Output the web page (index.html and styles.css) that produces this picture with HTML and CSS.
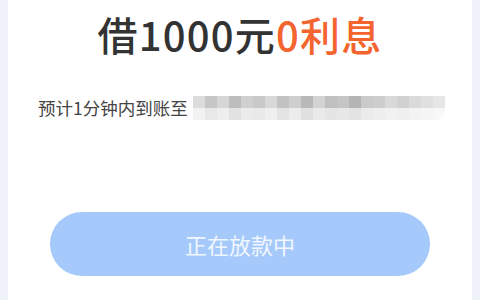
FILE: index.html
```html
<!DOCTYPE html>
<html lang="zh-CN">
<head>
  <meta charset="UTF-8">
  <meta name="viewport" content="width=device-width, initial-scale=1.0">
  <link rel="stylesheet" href="styles.css">
</head>
<body>

<div class="card">
  <h1 class="title">借1000元<span class="highlight">0利息</span></h1>

  <div class="arrive">
    <span class="arrive-text">预计1分钟内到账至</span>
    <!-- account number is masked -->
    <div class="mosaic">
      <i style="background:#dcdcdc"></i><i style="background:#c6c6c6"></i><i style="background:#d6d6d6"></i><i style="background:#bdbdbd"></i><i style="background:#d0d0d0"></i><i style="background:#c9c9c9"></i><i style="background:#d8d8d8"></i><i style="background:#c2c2c2"></i><i style="background:#cfcfcf"></i><i style="background:#b9b9b9"></i><i style="background:#d3d3d3"></i><i style="background:#c0c0c0"></i><i style="background:#c5c5c5"></i><i style="background:#b4b4b4"></i><i style="background:#cacaca"></i><i style="background:#cdcdcd"></i><i style="background:#d9d9d9"></i><i style="background:#d1d1d1"></i><i style="background:#dadada"></i><i style="background:#e0e0e0"></i><i style="background:#e6e6e6"></i>
      <i style="background:#f2f2f2"></i><i style="background:#e8e8e8"></i><i style="background:#eeeeee"></i><i style="background:#e2e2e2"></i><i style="background:#ebebeb"></i><i style="background:#e9e9e9"></i><i style="background:#efefef"></i><i style="background:#e4e4e4"></i><i style="background:#ececec"></i><i style="background:#e1e1e1"></i><i style="background:#eaeaea"></i><i style="background:#e5e5e5"></i><i style="background:#e7e7e7"></i><i style="background:#e3e3e3"></i><i style="background:#ebebeb"></i><i style="background:#eeeeee"></i><i style="background:#f1f1f1"></i><i style="background:#efefef"></i><i style="background:#f3f3f3"></i><i style="background:#f5f5f5"></i><i style="background:#f8f8f8"></i>
    </div>
  </div>

  <button class="loan-btn" disabled>正在放款中</button>
</div>

</body>
</html>
```

FILE: styles.css
```css
body {
  margin: 0;
  background: #eff3f9;
  font-family: "Noto Sans CJK SC", "Noto Sans", sans-serif;
}

.card {
  margin: 0 8px;
  min-height: 300px;
  background: #ffffff;
  padding-top: 7px;
  box-sizing: border-box;
}

.title {
  margin: 0;
  text-align: center;
  font-size: 40px;
  font-weight: 500;
  line-height: 54px;
  letter-spacing: 1.2px;
  color: #333333;
}

.highlight {
  color: #f4642f;
}

.arrive {
  display: flex;
  align-items: center;
  margin-top: 35px;
  padding-left: 30px;
}

.arrive-text {
  font-size: 17.5px;
  color: #444444;
  line-height: 24px;
}

/* pixelated account number */
.mosaic {
  display: grid;
  grid-template-columns: repeat(21, 12px);
  grid-auto-rows: 12px;
  margin-left: 5px;
  border-radius: 0 0 10px 0;
  overflow: hidden;
}

.mosaic i {
  display: block;
}

.loan-btn {
  display: block;
  width: 380px;
  height: 64px;
  margin: 92px auto 0;
  border: none;
  border-radius: 32px;
  background: #a4c9fa;
  color: #f2f7ff;
  font-family: inherit;
  font-size: 22px;
}
```
